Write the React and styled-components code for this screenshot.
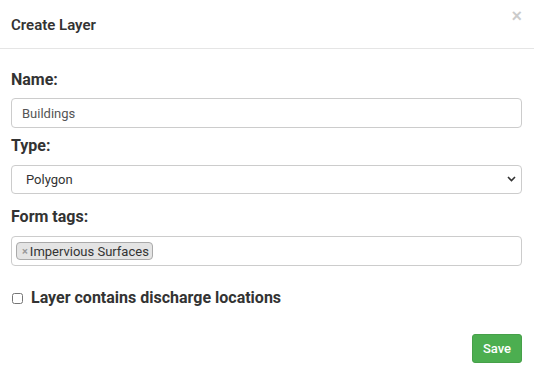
import styled, { createGlobalStyle } from 'styled-components';

const GlobalStyle = createGlobalStyle`
  body {
    margin: 0;
    background: #fff;
    font-family: Roboto, "Liberation Sans", sans-serif;
    color: #333;
  }
`

const Modal = styled.div`
  width: 534px;
  height: 378px;
  background: #fff;
  display: flex;
  flex-direction: column;
`

const Header = styled.div`
  height: 48px;
  border-bottom: 1px solid #e5e5e5;
  padding: 0 12px 0 11px;
  display: flex;
  align-items: center;
  justify-content: space-between;
`

const Title = styled.div`
  font-size: 15px;
  font-weight: 600;
  line-height: 20px;
  margin-top: 1px;
`

const Close = styled.button`
  align-self: flex-start;
  margin-top: 7px;
  border: 0;
  padding: 0;
  background: none;
  font-family: "Liberation Sans", sans-serif;
  font-size: 18px;
  font-weight: bold;
  line-height: 1;
  color: #000;
  opacity: 0.2;
  cursor: pointer;
`

const Body = styled.div`
  padding: 21px 12px 0 11px;
  display: flex;
  flex-direction: column;
`

const Group = styled.div`
  display: flex;
  flex-direction: column;
  margin-bottom: ${({ gap }) => gap || 0}px;
`

const Label = styled.label`
  font-size: 16px;
  font-weight: bold;
  line-height: 20px;
  margin-bottom: ${({ gap }) => gap || 8}px;
`

const Input = styled.input`
  box-sizing: border-box;
  height: 30px;
  width: 100%;
  border: 1px solid #ccc;
  border-radius: 4px;
  padding: 0 10px;
  font-family: inherit;
  font-size: 13px;
  color: #555;
  outline: none;
`

const SelectWrap = styled.div`
  position: relative;
  height: 29px;
`

const Select = styled.select`
  box-sizing: border-box;
  appearance: none;
  height: 29px;
  width: 100%;
  border: 1px solid #ccc;
  border-radius: 4px;
  padding: 0 14px;
  background: #fff;
  font-family: inherit;
  font-size: 13px;
  color: #333;
  outline: none;
`

const Chevron = styled.svg`
  position: absolute;
  right: 6px;
  top: 11px;
  pointer-events: none;
`

const TagBox = styled.div`
  box-sizing: border-box;
  height: 30px;
  border: 1px solid #ccc;
  border-radius: 4px;
  padding: 5px 4px;
  display: flex;
  align-items: flex-start;
`

const Tag = styled.span`
  display: inline-flex;
  align-items: center;
  height: 18px;
  box-sizing: border-box;
  background: #e4e4e4;
  border: 1px solid #aaa;
  border-radius: 4px;
  padding: 0 3px 0 5px;
  font-size: 13px;
  color: #333;
`

const TagRemove = styled.span`
  color: #999;
  font-weight: bold;
  font-size: 11px;
  margin-right: 2px;
`

const CheckRow = styled.label`
  display: flex;
  align-items: center;
  gap: 8px;
  margin-top: 22px;
  font-size: 16px;
  font-weight: bold;
  line-height: 20px;
`

const Check = styled.input`
  width: 11px;
  height: 11px;
  margin: 0 0 0 1px;
`

const Footer = styled.div`
  display: flex;
  justify-content: flex-end;
  padding: 26px 12px 0 11px;
`

const SaveButton = styled.button`
  width: 50px;
  height: 29px;
  border: 1px solid #46a049;
  border-radius: 3px;
  background: #4cae50;
  color: #fff;
  font-family: inherit;
  font-size: 13px;
  font-weight: 500;
  cursor: pointer;
`

const App = () => {
  return (
    <>
      <GlobalStyle />
      <Modal>
        <Header>
          <Title>Create Layer</Title>
          <Close>×</Close>
        </Header>
        <Body>
          <Group gap={8}>
            <Label>Name:</Label>
            <Input defaultValue="Buildings" />
          </Group>
          <Group gap={13}>
            <Label gap={9}>Type:</Label>
            <SelectWrap>
              <Select defaultValue="Polygon">
                <option>Polygon</option>
                <option>Line</option>
                <option>Point</option>
              </Select>
              <Chevron width="9" height="6" viewBox="0 0 9 6">
                <path d="M1 1l3.5 3.5L8 1" fill="none" stroke="#333" strokeWidth="1.6" />
              </Chevron>
            </SelectWrap>
          </Group>
          <Group>
            <Label gap={9}>Form tags:</Label>
            <TagBox>
              <Tag>
                <TagRemove>×</TagRemove>
                Impervious Surfaces
              </Tag>
            </TagBox>
          </Group>
          <CheckRow>
            <Check type="checkbox" />
            Layer contains discharge locations
          </CheckRow>
        </Body>
        <Footer>
          <SaveButton>Save</SaveButton>
        </Footer>
      </Modal>
    </>
  )
}

export default App;
